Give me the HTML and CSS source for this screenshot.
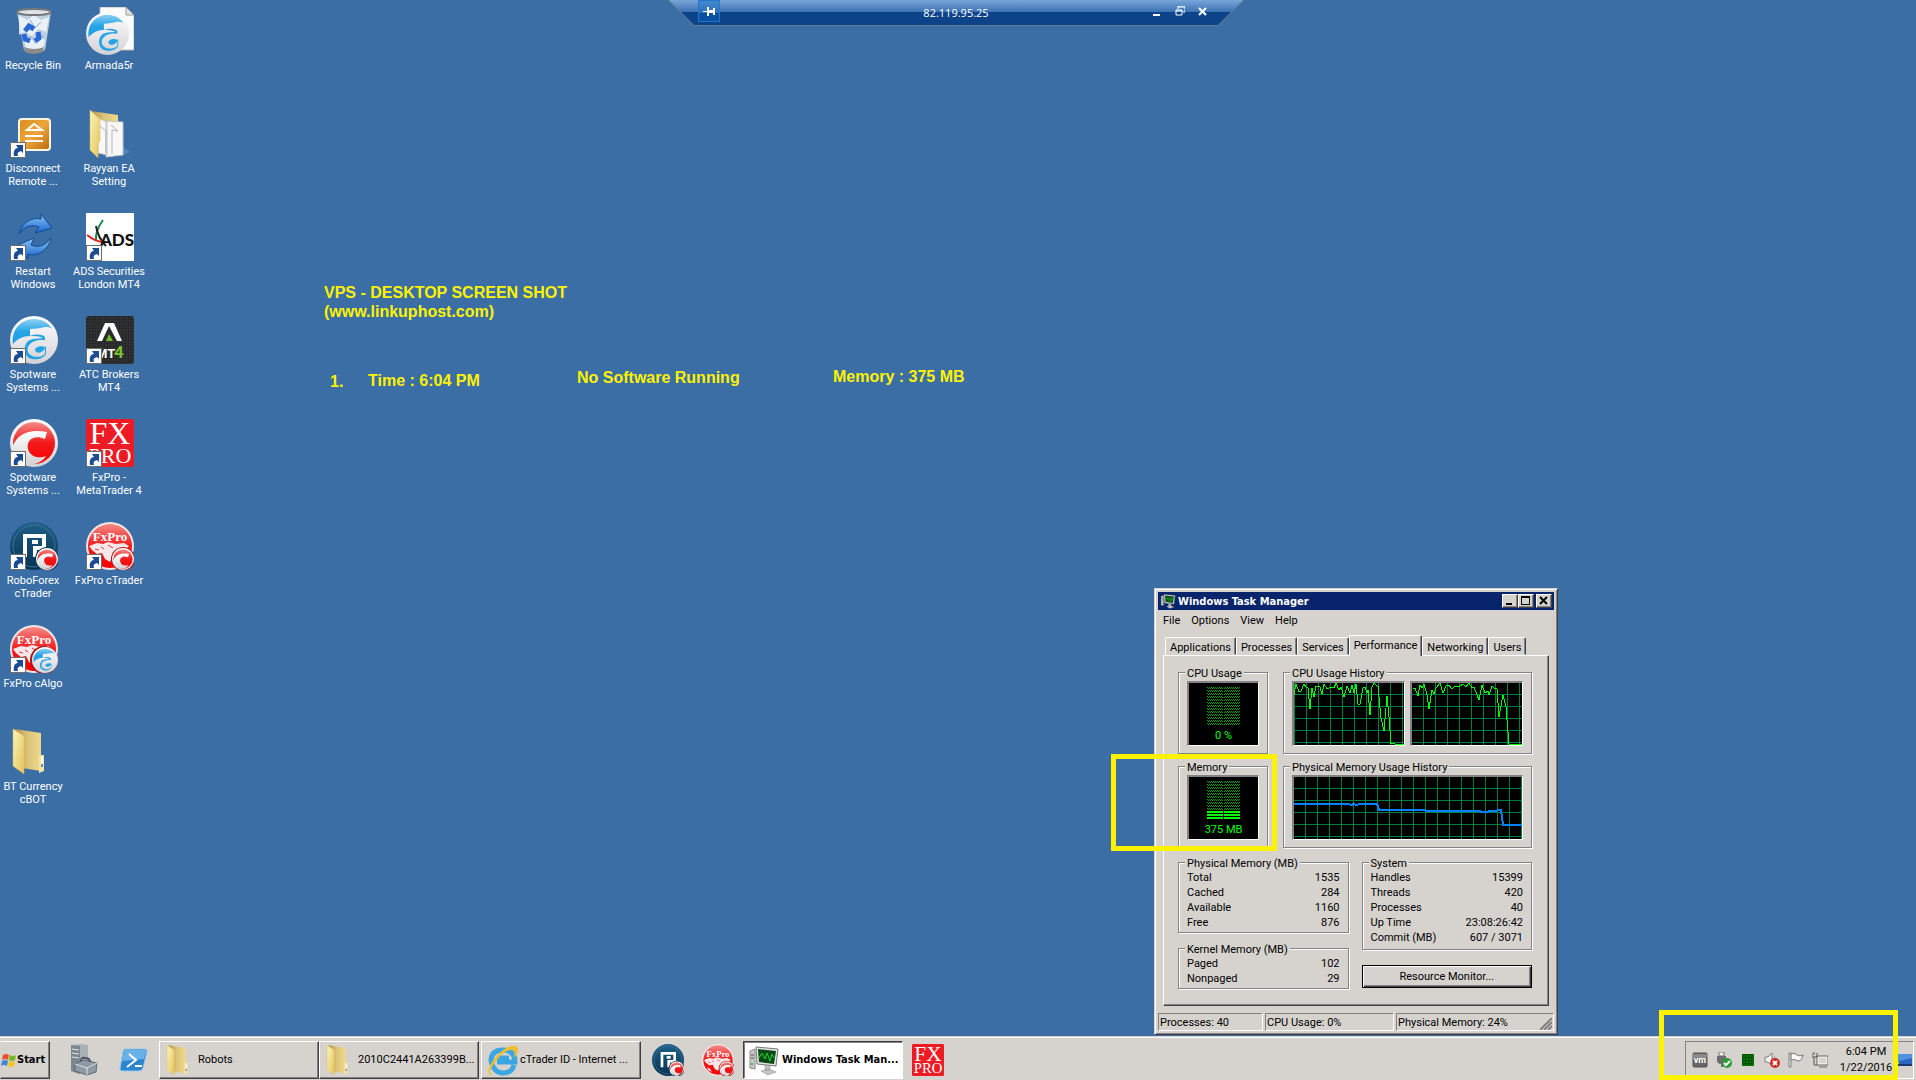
FILE: index.html
```
<!DOCTYPE html>
<html lang="en">

<head>
    <meta charset="UTF-8">
    <meta name="viewport" content="width=device-width, initial-scale=1.0">
    <title>Remote Desktop</title>
    <link rel="stylesheet" href="styles.css">
</head>

<body>
    <!-- Shared icon symbols -->
    <svg class="sprite" aria-hidden="true">
        <defs>
            <linearGradient id="silver" x1="0" y1="0" x2="0" y2="1">
                <stop offset="0" stop-color="#ffffff" />
                <stop offset="1" stop-color="#d2d2d6" />
            </linearGradient>
            <linearGradient id="sky" x1="0" y1="0" x2="0" y2="1">
                <stop offset="0" stop-color="#8fd0f2" />
                <stop offset=".5" stop-color="#25a5e6" />
                <stop offset="1" stop-color="#1f9fe2" />
            </linearGradient>
            <linearGradient id="red" x1="0" y1="0" x2="0" y2="1">
                <stop offset="0" stop-color="#f58a85" />
                <stop offset=".5" stop-color="#f21a1c" />
                <stop offset="1" stop-color="#f80000" />
            </linearGradient>
            <linearGradient id="orange" x1="0" y1="0" x2="1" y2="1">
                <stop offset="0" stop-color="#d98a1c" />
                <stop offset=".5" stop-color="#eda63c" />
                <stop offset="1" stop-color="#b9690a" />
            </linearGradient>
            <linearGradient id="navy" x1="0" y1="0" x2="0" y2="1">
                <stop offset="0" stop-color="#20608a" />
                <stop offset="1" stop-color="#063250" />
            </linearGradient>
            <linearGradient id="arrowBlue" x1="0" y1="0" x2="0" y2="1">
                <stop offset="0" stop-color="#8cc6f5" />
                <stop offset="1" stop-color="#1260cf" />
            </linearGradient>
            <linearGradient id="folder" x1="0" y1="0" x2="1" y2="1">
                <stop offset="0" stop-color="#fdf5b8" />
                <stop offset="1" stop-color="#e2c25a" />
            </linearGradient>
            <linearGradient id="folderBack" x1="0" y1="0" x2="1" y2="0">
                <stop offset="0" stop-color="#b3924a" />
                <stop offset=".5" stop-color="#dcc478" />
                <stop offset="1" stop-color="#efd98a" />
            </linearGradient>
            <pattern id="dither" width="2" height="3" patternUnits="userSpaceOnUse">
                <path d="M0 0h1v1H0zM1 1h1v1H1z" fill="#00a000" />
            </pattern>
            <pattern id="grid" x="11" y="11" width="12" height="12" patternUnits="userSpaceOnUse">
                <path d="M0 0h12v1H1v11H0z" fill="#008040" />
            </pattern>
            <pattern id="gridShift" x="12" y="11" width="12" height="12" patternUnits="userSpaceOnUse">
                <path d="M0 0h12v1H1v11H0z" fill="#008040" />
            </pattern>
            <pattern id="mesh" width="3" height="3" patternUnits="userSpaceOnUse">
                <path d="M0 0h3v3H0z" fill="#2d2f31" />
                <path d="M0 0h1v1H0z" fill="#17191a" />
            </pattern>
        </defs>

        <symbol id="i-shortcut" viewBox="0 0 16 16">
            <path d="M0 0h16v16H0z" fill="#6d6d6d" />
            <path d="M1 1h14v14H1z" fill="#fff" />
            <path d="M4 14C3 9 5 6 8 6L6 3h7v8l-2-2c-3 1-4 2-3 5z" fill="#1b4b93" />
        </symbol>

        <symbol id="i-algo" viewBox="0 0 48 48">
            <circle cx="24" cy="24" r="24" fill="url(#silver)" />
            <path d="M3 28C1 14 11 3 24 3C32 3 39 7 42 13C40 11 38 11 35 11C30 12 25 13 20 13V20C13 20 7 23 3 28z" fill="url(#sky)" />
            <path d="M20 20C26 18 31 18 35 21V24C29 24 21 24 18 31C15 40 28 44 35 38L35 31C31 29 25 31 25 34C26 38 31 37 34 34L36 30V38C34 42 28 44 22 43C12 41 13 27 20 24C24 22 29 23 33 22C29 20 24 20 20 20z" fill="#25a4e5" />
        </symbol>

        <symbol id="i-trader" viewBox="0 0 48 48">
            <circle cx="24" cy="24" r="24" fill="url(#silver)" />
            <circle cx="24" cy="24" r="21" fill="url(#red)" />
            <path d="M2 29C7 14 20 10 37 13L35 20C23 15 16 22 18 30C20 38 29 40 36 37C31 46 17 48 10 42C4 38 2 34 2 29z" fill="url(#silver)" />
        </symbol>

        <symbol id="i-robo" viewBox="0 0 48 48">
            <circle cx="24" cy="24" r="24" fill="url(#navy)" />
            <circle cx="24" cy="24" r="21" fill="none" stroke="#3f7496" />
            <path d="M15 35V14H34V26H25V35M22 20H28" fill="none" stroke="#fff" stroke-width="4" />
            <circle cx="37" cy="37" r="12" fill="#083653" />
            <use href="#i-trader" x="26" y="26" width="22" height="22" />
        </symbol>

        <symbol id="i-fxball" viewBox="0 0 48 48">
            <circle cx="24" cy="24" r="24" fill="#f3e4e4" />
            <circle cx="24" cy="24" r="22" fill="url(#red)" />
            <path d="M3 24l8-3 6 1 5-2 8 2 8-1 5 3-4 4-7-1-4 4-4 9-5-3-3-6-5 1-5-4zM8 35l4 2 3 5-6-3z" fill="#f7e9e9" />
            <path d="M15 25l3 2M22 23l5 3M9 27l4 1" stroke="#ee3333" />
            <text x="24" y="19" class="serif-mark" font-size="13" font-weight="bold" text-anchor="middle">FxPro</text>
        </symbol>

        <symbol id="i-fxtrader" viewBox="0 0 48 48">
            <use href="#i-fxball" width="48" height="48" />
            <circle cx="37" cy="37" r="12" fill="#b01818" />
            <use href="#i-trader" x="26" y="26" width="22" height="22" />
        </symbol>

        <symbol id="i-fxpro" viewBox="0 0 48 48">
            <rect width="48" height="48" rx="2" fill="#ed1c24" />
            <text x="24" y="25" class="serif-mark" font-size="32" text-anchor="middle">FX</text>
            <text x="24" y="44" class="serif-mark" font-size="22" text-anchor="middle">PRO</text>
        </symbol>

        <symbol id="i-folder" viewBox="0 0 48 48">
            <path d="M11 2l26 4v38l-19-3z" fill="url(#folderBack)" />
            <path d="M35 28h5v16l-5 2z" fill="#f5e3a0" />
            <path d="M37 30h2v9h-2z" fill="#fff" />
            <path d="M37 37h2v3h-2z" fill="#4a90e0" />
            <path d="M9 2l11 7v38L9 39z" fill="url(#folder)" stroke="#d9b95a" stroke-width=".5" />
        </symbol>

        <symbol id="i-monitor" viewBox="0 0 32 32">
            <path d="M1 7l5-2v20l-5-1z" fill="#c9c9c9" stroke="#8a8a8a" />
            <path d="M2 11h3M2 14h3" stroke="#555" />
            <path d="M2 19h2v2H2z" fill="#1ed81e" />
            <path d="M7 3l22 2-2 17-19-2z" fill="#e4e4e4" stroke="#777" />
            <path d="M9 5l18 2-2 13-15-2z" fill="#0a4a14" />
            <path d="M10 14l3-5 3 6 2-6 3 8 2-7 2 4" fill="none" stroke="#20d030" />
            <path d="M16 21l5 1v4h-5zM12 27l8-2 7 3-8 3z" fill="#c4c4c4" stroke="#888" stroke-width=".5" />
        </symbol>
    </svg>

    <main class="desktop">
        <nav class="shortcuts" aria-label="Desktop shortcuts">
            <div class="shortcut-column">
                <a href="#" class="shortcut">
                    <svg viewBox="0 0 48 48">
                        <path d="M7 5h34l-6 38q-10 5-21 0z" fill="#cfdae8" fill-opacity=".9" />
                        <path d="M9 9l9 4 6-5 7 5 8-3-3 15-8-3-6 8-7-6-6 4zM14 30l7 3 6-4 8 4-2 9H16z" fill="#f4f8fc" fill-opacity=".8" />
                        <path d="M20 13l5 8 6-6M15 34l6-5 5 8M28 26l6 4" fill="none" stroke="#8fa9c8" />
                        <ellipse cx="24" cy="5" rx="17" ry="3" fill="#dfe3e6" stroke="#73787c" stroke-width="2" />
                        <path d="M14 40q10 4 20 0l-1 5q-9 4-18 0z" fill="#8b8b88" />
                        <g fill="none" stroke="#2a66d6" stroke-width="5">
                            <path d="M15 24l4-5 5 3M28 25l1 6-4 3M20 34l-5-2-1-5" />
                        </g>
                    </svg>
                    <span>Recycle Bin</span>
                </a>
                <a href="#" class="shortcut">
                    <svg viewBox="0 0 48 48">
                        <rect x="9" y="9" width="31" height="31" rx="3" fill="url(#orange)" stroke="#fff4dc" stroke-width="2" />
                        <path d="M17 20l7-6 8 6zM15 26h18M15 31h18" fill="none" stroke="#fff" stroke-width="2" />
                        <use href="#i-shortcut" y="32" width="16" height="16" />
                    </svg>
                    <span>Disconnect<br>Remote ...</span>
                </a>
                <a href="#" class="shortcut">
                    <svg viewBox="0 0 48 48">
                        <path d="M9 21C12 9 22 4 31 6V1l11 14-17 5 4-6C22 11 15 13 9 21z" fill="url(#arrowBlue)" stroke="#12498f" />
                        <path d="M41 25C38 38 27 44 18 41v5L8 32l16-7-3 7c7 3 14 1 20-7z" fill="url(#arrowBlue)" stroke="#12498f" />
                        <use href="#i-shortcut" y="32" width="16" height="16" />
                    </svg>
                    <span>Restart<br>Windows</span>
                </a>
                <a href="#" class="shortcut">
                    <svg viewBox="0 0 48 48">
                        <use href="#i-algo" width="48" height="48" />
                        <use href="#i-shortcut" y="32" width="16" height="16" />
                    </svg>
                    <span>Spotware<br>Systems ...</span>
                </a>
                <a href="#" class="shortcut">
                    <svg viewBox="0 0 48 48">
                        <use href="#i-trader" width="48" height="48" />
                        <use href="#i-shortcut" y="32" width="16" height="16" />
                    </svg>
                    <span>Spotware<br>Systems ...</span>
                </a>
                <a href="#" class="shortcut">
                    <svg viewBox="0 0 48 48">
                        <use href="#i-robo" width="48" height="48" />
                        <use href="#i-shortcut" y="32" width="16" height="16" />
                    </svg>
                    <span>RoboForex<br>cTrader</span>
                </a>
                <a href="#" class="shortcut">
                    <svg viewBox="0 0 48 48">
                        <use href="#i-fxball" width="48" height="48" />
                        <circle cx="34" cy="35" r="14" fill="#a81616" />
                        <use href="#i-algo" x="22" y="22" width="26" height="26" />
                        <use href="#i-shortcut" y="32" width="16" height="16" />
                    </svg>
                    <span>FxPro cAlgo</span>
                </a>
                <a href="#" class="shortcut">
                    <svg viewBox="6 1 48 48">
                        <use href="#i-folder" width="48" height="48" />
                    </svg>
                    <span>BT Currency<br>cBOT</span>
                </a>
            </div>
            <div class="shortcut-column">
                <a href="#" class="shortcut">
                    <svg viewBox="0 0 48 48">
                        <path d="M14 0h26l8 8v35H14z" fill="#fbfbfb" stroke="#b8b8b8" />
                        <path d="M40 0v8h8z" fill="#e2e2e2" stroke="#9c9c9c" />
                        <use href="#i-algo" y="5" width="43" height="43" />
                    </svg>
                    <span>Armada5r</span>
                </a>
                <a href="#" class="shortcut">
                    <svg viewBox="0 0 48 48">
                        <path d="M36 36l8 6-8 4z" fill="#4f86bf" />
                        <path d="M5 1l27 4v37l-18-2z" fill="url(#folderBack)" />
                        <path d="M12 8l9 4v33l-9-2zM20 11l17 1v33l-17 2z" fill="#f8f8f8" stroke="#c4c4c4" />
                        <path d="M14 16l6 5v22M25 15l7 6-6-1v24" fill="none" stroke="#b5b5b5" />
                        <path d="M4 0l10 9v22l-2 2v15L4 40z" fill="url(#folder)" stroke="#d9b95a" stroke-width=".5" />
                    </svg>
                    <span>Rayyan EA<br>Setting</span>
                </a>
                <a href="#" class="shortcut">
                    <svg viewBox="0 0 48 48">
                        <path d="M0 0h48v48H0z" fill="#fff" />
                        <path d="M17 7q-8 11-7 21" fill="none" stroke="#138a45" stroke-width="2" />
                        <path d="M10 13q2 12 10 20" fill="none" stroke="#222" stroke-width="2" />
                        <path d="M1 22q10 8 19 7" fill="none" stroke="#e32020" stroke-width="2" />
                        <text x="31" y="33" class="ads-mark" font-size="17" text-anchor="middle">ADS</text>
                        <use href="#i-shortcut" y="32" width="16" height="16" />
                    </svg>
                    <span>ADS Securities<br>London MT4</span>
                </a>
                <a href="#" class="shortcut">
                    <svg viewBox="0 0 48 48">
                        <rect width="48" height="48" rx="3" fill="url(#mesh)" />
                        <path d="M11 25L19 7h9l8 18h-5L23 10l-7 15z" fill="#fff" />
                        <path d="M20 25l3-7 4 7z" fill="#6fbf2b" />
                        <text x="10" y="42" class="mt-mark" font-size="13">MT</text>
                        <text x="28" y="42" class="mt-mark mt-four" font-size="17">4</text>
                        <use href="#i-shortcut" y="32" width="16" height="16" />
                    </svg>
                    <span>ATC Brokers<br>MT4</span>
                </a>
                <a href="#" class="shortcut">
                    <svg viewBox="0 0 48 48">
                        <use href="#i-fxpro" width="48" height="48" />
                        <use href="#i-shortcut" y="32" width="16" height="16" />
                    </svg>
                    <span>FxPro -<br>MetaTrader 4</span>
                </a>
                <a href="#" class="shortcut">
                    <svg viewBox="0 0 48 48">
                        <use href="#i-fxtrader" width="48" height="48" />
                        <use href="#i-shortcut" y="32" width="16" height="16" />
                    </svg>
                    <span>FxPro cTrader</span>
                </a>
            </div>
        </nav>

        <!-- Remote connection bar -->
        <header class="remote-bar">
            <div class="remote-inner">
                <button class="remote-pin" aria-label="Pin">
                    <svg width="12" height="9" viewBox="0 0 12 9"><path d="M0 4h4v1H0zM4 0h2v9H4zM6 3h4v3H6zM10 1h2v7h-2z" fill="#fff" /></svg>
                </button>
                <span class="remote-address">82.119.95.25</span>
                <div class="remote-controls">
                    <button aria-label="Minimize"><svg width="10" height="10"><path d="M1 8h7v2H1z" fill="#fff" /></svg></button>
                    <button aria-label="Restore"><svg width="10" height="10"><path d="M3 0h7v6H8M3 0v3M3 1h7M1 4h6v5H1zM1 5h6" fill="none" stroke="#fff" /></svg></button>
                    <button aria-label="Close"><svg width="10" height="10"><path d="M1 2l7 7M8 2L1 9" stroke="#fff" stroke-width="2" /></svg></button>
                </div>
            </div>
        </header>

        <p class="note note-title">VPS - DESKTOP SCREEN SHOT<br>(www.linkuphost.com)</p>
        <p class="note note-number">1.</p>
        <p class="note note-time">Time : 6:04 PM</p>
        <p class="note note-software">No Software Running</p>
        <p class="note note-memory">Memory : 375 MB</p>

        <!-- Task Manager -->
        <section class="window">
            <div class="title-bar">
                <svg class="title-icon" width="17" height="16" viewBox="0 0 32 32"><use href="#i-monitor" width="32" height="32" /></svg>
                <h1>Windows Task Manager</h1>
                <button aria-label="Minimize"><svg width="12" height="10"><path d="M2 7h6v2H2z" /></svg></button>
                <button aria-label="Maximize"><svg width="12" height="10"><path d="M1 0h9v9H1zM2 2v6h7V2z" fill-rule="evenodd" /></svg></button>
                <button class="close" aria-label="Close"><svg width="12" height="10"><path d="M2 1l7 7M9 1L2 8" stroke="#000" stroke-width="2" /></svg></button>
            </div>
            <nav class="menu">
                <a href="#">File</a>
                <a href="#">Options</a>
                <a href="#">View</a>
                <a href="#">Help</a>
            </nav>
            <div class="tabs" role="tablist">
                <button role="tab">Applications</button>
                <button role="tab">Processes</button>
                <button role="tab">Services</button>
                <button role="tab" class="selected" aria-selected="true">Performance</button>
                <button role="tab">Networking</button>
                <button role="tab">Users</button>
            </div>
            <div class="panel">
                <div class="panel-row">
                    <fieldset class="gauge-group">
                        <legend>CPU Usage</legend>
                        <div class="screen gauge">
                            <svg width="33" height="38"><path d="M0 0h16v38H0zM17 0h16v38H17z" fill="url(#dither)" /></svg>
                            <span>0 %</span>
                        </div>
                    </fieldset>
                    <fieldset class="history-group">
                        <legend>CPU Usage History</legend>
                        <div class="screens">
                            <div class="screen">
                                <svg viewBox="0 0 110 62" preserveAspectRatio="none">
                                    <path d="M0 0h110v62H0z" fill="url(#gridShift)" />
                                    <polyline class="cpu-line" points="0,12 2,1 5,9 7,8 10,1 12,4 14,5 16,26 18,5 20,14 22,3 24,3 26,4 28,11 30,1 33,6 37,4 40,5 42,0 45,7 47,4 50,14 53,3 56,10 58,2 60,10 62,1 64,21 66,21 69,5 71,4 73,10 74,7 76,32 78,4 80,0 83,3 84,3 87,35 90,48 93,13 95,34 97,61 99,60 101,61 110,61" />
                                </svg>
                            </div>
                            <div class="screen">
                                <svg viewBox="0 0 110 62" preserveAspectRatio="none">
                                    <path d="M0 0h110v62H0z" fill="url(#grid)" />
                                    <polyline class="cpu-line" points="1,5 3,5 6,13 8,2 10,5 12,1 15,12 17,26 20,7 22,11 24,5 28,0 31,10 34,3 37,2 40,6 43,3 47,4 51,1 54,4 57,0 60,5 62,4 67,17 70,2 73,10 76,8 77,12 80,3 82,5 85,6 87,34 91,12 94,24 95,37 97,61 110,61" />
                                </svg>
                            </div>
                        </div>
                    </fieldset>
                </div>
                <div class="panel-row">
                    <fieldset class="gauge-group">
                        <legend>Memory</legend>
                        <div class="screen gauge">
                            <svg width="33" height="38">
                                <path d="M0 0h16v29H0zM17 0h16v29H17z" fill="url(#dither)" />
                                <path d="M0 30h16v2H0zM17 30h16v2H17zM0 33h16v2H0zM17 33h16v2H17zM0 36h16v2H0zM17 36h16v2H17z" fill="#00ff00" />
                            </svg>
                            <span>375 MB</span>
                        </div>
                    </fieldset>
                    <fieldset class="history-group">
                        <legend>Physical Memory Usage History</legend>
                        <div class="screens">
                            <div class="screen">
                                <svg viewBox="0 0 228 62" preserveAspectRatio="none">
                                    <path d="M0 0h228v62H0z" fill="url(#grid)" />
                                    <polyline class="memory-line" points="0,27 55,27 57,28 60,27 62,28 66,27 83,27 85,33 131,33 132,34 185,34 188,35 193,35 196,34 202,34 204,33 207,33 209,48 228,48" />
                                </svg>
                            </div>
                        </div>
                    </fieldset>
                </div>
                <div class="details">
                    <div class="details-column">
                        <fieldset>
                            <legend>Physical Memory (MB)</legend>
                            <table>
                                <tr><th scope="row">Total</th><td>1535</td></tr>
                                <tr><th scope="row">Cached</th><td>284</td></tr>
                                <tr><th scope="row">Available</th><td>1160</td></tr>
                                <tr><th scope="row">Free</th><td>876</td></tr>
                            </table>
                        </fieldset>
                        <fieldset>
                            <legend>Kernel Memory (MB)</legend>
                            <table>
                                <tr><th scope="row">Paged</th><td>102</td></tr>
                                <tr><th scope="row">Nonpaged</th><td>29</td></tr>
                            </table>
                        </fieldset>
                    </div>
                    <div class="details-column">
                        <fieldset class="system-group">
                            <legend>System</legend>
                            <table>
                                <tr><th scope="row">Handles</th><td>15399</td></tr>
                                <tr><th scope="row">Threads</th><td>420</td></tr>
                                <tr><th scope="row">Processes</th><td>40</td></tr>
                                <tr><th scope="row">Up Time</th><td>23:08:26:42</td></tr>
                                <tr><th scope="row">Commit (MB)</th><td>607 / 3071</td></tr>
                            </table>
                        </fieldset>
                        <button class="resource-button">Resource Monitor...</button>
                    </div>
                </div>
            </div>
            <footer class="status-bar">
                <span class="status-processes">Processes: 40</span>
                <span class="status-cpu">CPU Usage: 0%</span>
                <span class="status-memory">Physical Memory: 24%
                    <svg width="12" height="12"><path d="M0 12L12 0M4 12l8-8M8 12l4-4" stroke="#808080" stroke-width="2" /></svg>
                </span>
            </footer>
        </section>

        <div class="marker marker-memory"></div>
    </main>

    <div class="taskbar">
        <button class="start">
            <svg width="16" height="16" viewBox="0 0 16 16">
                <path d="M2 3q3-2 6 0L7 8q-3-2-6 0z" fill="#e8502a" />
                <path d="M9 3q3 2 6 0l-1 5q-3 2-6 0z" fill="#76b82a" />
                <path d="M1 9q3-2 6 0l-1 5q-3-2-6 0z" fill="#3b87d8" />
                <path d="M8 9q3 2 6 0l-1 5q-3 2-6 0z" fill="#f6c31c" />
            </svg>
            Start
        </button>
        <button class="launch" aria-label="Server Manager">
            <svg viewBox="0 0 32 32">
                <path d="M3 1l9-1 8 1v26l-9 3-8-3z" fill="#a9b1b6" />
                <path d="M3 1l9 1v28l-9-3z" fill="#7c868d" />
                <path d="M4 5l7 1M4 9l7 1M4 13l7 1" stroke="#dfe6ea" />
                <path d="M7 20l9-4 13 3-1 9-9 3-12-4z" fill="#8e9ba5" stroke="#5f6b74" />
                <path d="M7 20l12 4 10-5M19 24v7" fill="none" stroke="#d8e0e5" />
                <path d="M13 17q0-4 4-3 5 0 5 4" fill="none" stroke="#4b545b" stroke-width="2" />
            </svg>
        </button>
        <button class="launch" aria-label="PowerShell">
            <svg viewBox="0 0 32 32">
                <path d="M7 5h20q3 0 2 3l-4 16q-1 3-4 3H4q-3 0-2-3L5 8q0-3 2-3z" fill="#2b86cf" stroke="#9ccbee" />
                <path d="M7 6h20q2 0 1 2l-2 7L4 17 6 8q0-2 1-2z" fill="#69b1e6" />
                <path d="M11 10l7 6-9 7M17 22h7" fill="none" stroke="#fff" stroke-width="2" />
            </svg>
        </button>
        <button class="task">
            <svg viewBox="6 0 48 48"><use href="#i-folder" width="48" height="48" /></svg>
            <span>Robots</span>
        </button>
        <button class="task">
            <svg viewBox="6 0 48 48"><use href="#i-folder" width="48" height="48" /></svg>
            <span>2010C2441A263399B...</span>
        </button>
        <button class="task task-browser">
            <svg viewBox="0 0 32 32">
                <path d="M27 21q-2 8-11 8T4 17Q4 6 16 6t12 12H10M10 14h12" fill="none" stroke="#3aa6e2" stroke-width="5" />
                <path d="M3 31Q-2 26 9 13T29 2q5 4-2 12 2-8-2-8Q18 5 9 17T5 30z" fill="#f2bd2c" />
            </svg>
            <span>cTrader ID - Internet ...</span>
        </button>
        <button class="launch" aria-label="RoboForex cTrader"><svg viewBox="0 0 48 48"><use href="#i-robo" width="48" height="48" /></svg></button>
        <button class="launch" aria-label="FxPro cTrader"><svg viewBox="0 0 48 48"><use href="#i-fxtrader" width="48" height="48" /></svg></button>
        <button class="task active">
            <svg viewBox="0 0 32 32"><use href="#i-monitor" width="32" height="32" /></svg>
            <span>Windows Task Man...</span>
        </button>
        <button class="launch" aria-label="FxPro MetaTrader 4"><svg viewBox="0 0 48 48"><use href="#i-fxpro" width="48" height="48" /></svg></button>

        <div class="tray">
            <svg viewBox="0 0 16 16">
                <rect x="1" y="1" width="14" height="14" rx="1" fill="#666" stroke="#555" />
                <path d="M1 2h14v4H1z" fill="#8a8a8a" />
                <text x="8" y="11" class="vm-mark" font-size="9" text-anchor="middle">vm</text>
            </svg>
            <svg viewBox="0 0 16 16">
                <path d="M3 0h5v4H3z" fill="#eee" stroke="#777" />
                <path d="M1 4h9v5q0 3-3 3v3H5v-3q-4 0-4-4z" fill="#6d6d6d" />
                <circle cx="11" cy="11" r="5" fill="#2c9b36" />
                <path d="M8 11l2 2 4-4" fill="none" stroke="#fff" stroke-width="2" />
            </svg>
            <svg viewBox="0 0 16 16">
                <path d="M2 2h12v12H2z" fill="#003c00" />
                <path d="M4 2v12M7 2v12M10 2v12M13 2v12M2 4h12M2 7h12M2 10h12M2 13h12" stroke="#008000" />
            </svg>
            <svg viewBox="0 0 16 16">
                <path d="M1 5h3l4-4v13l-4-4H1z" fill="#f5f5f5" stroke="#7a7a7a" />
                <path d="M10 4q2 2 1 5" fill="none" stroke="#999" />
                <circle cx="11" cy="11" r="5" fill="#d8281e" />
                <path d="M9 9l4 4M13 9l-4 4" stroke="#fff" stroke-width="2" />
            </svg>
            <svg viewBox="0 0 16 16">
                <path d="M1 1h2v14H1z" fill="#fff" stroke="#777" />
                <path d="M3 2q3-2 6 1 3 2 6 0-1 6-4 6-2 0-3-1-2-1-5 0z" fill="#fafafa" stroke="#777" />
            </svg>
            <svg viewBox="0 0 16 16">
                <path d="M5 4h11v9H5z" fill="#eee" stroke="#666" />
                <path d="M7 6h7v5H7z" fill="#d6d3ce" />
                <path d="M7 15h8" stroke="#666" />
                <path d="M0 1v4h5V1M2 0v3M2 5v8h3" fill="none" stroke="#555" />
            </svg>
            <time class="clock">6:04 PM<br>1/22/2016</time>
            <svg class="show-desktop" viewBox="0 0 16 16">
                <path d="M0 2h16v11H0z" fill="#2868c0" />
                <path d="M0 2h16v4L0 10z" fill="#4f92e0" />
                <path d="M0 12h16v2H0z" fill="#173b70" />
                <path d="M1 10h2v2H1z" fill="#f6c31c" />
            </svg>
        </div>
        <div class="marker marker-clock"></div>
    </div>
</body>

</html>
```
FILE: styles.css
```
* {
    box-sizing: border-box;
}

body {
    display: flex;
    flex-direction: column;
    min-height: 100vh;
    margin: 0;
    overflow: hidden;
    background: #3a6ea5;
    color: #000;
    font: 11px/14px Roboto, "Liberation Sans", sans-serif;
}

button {
    padding: 0;
    border: 0;
    background: none;
    color: inherit;
    font: inherit;
}

a {
    color: inherit;
    text-decoration: none;
}

svg {
    display: block;
    flex: none;
}

.sprite {
    position: absolute;
    visibility: hidden;
    width: 0;
    height: 0;
}

/* Patterns take their visibility from the sprite, not from the shape they fill */
.sprite pattern {
    visibility: visible;
}

/* Lettering inside logos */
.serif-mark {
    fill: #fff;
    font-family: "Liberation Serif", serif;
}

.ads-mark {
    fill: #111;
    font-family: Lato, sans-serif;
    font-weight: 900;
}

.mt-mark {
    fill: #fff;
    font-family: Roboto, sans-serif;
    font-weight: bold;
}

.mt-four {
    fill: #7ac52f;
}

.vm-mark {
    fill: #fff;
    font-family: Roboto, sans-serif;
    font-weight: bold;
}

/* Desktop */
.desktop {
    position: relative;
    flex: 1;
}

.shortcuts {
    display: flex;
    margin-left: -4px;
    padding-top: 7px;
}

.shortcut-column {
    display: flex;
    flex-direction: column;
    width: 76px;
}

.shortcut {
    display: flex;
    flex-direction: column;
    align-items: center;
    height: 103px;
    color: #fff;
    line-height: 13px;
    text-align: center;
}

.shortcut svg {
    width: 48px;
    height: 48px;
    margin-bottom: 4px;
}

.shortcut span {
    margin-right: 2px;
    white-space: nowrap;
}

/* Remote connection bar */
.remote-bar {
    position: absolute;
    top: 0;
    left: calc(50% - 290px);
    width: 576px;
    height: 26px;
    padding: 0 1px 1px;
    background: #6c7c90;
    clip-path: polygon(0 0, 100% 0, 550px 100%, 26px 100%);
}

.remote-inner {
    display: flex;
    align-items: flex-start;
    height: 25px;
    padding: 0 29px;
    background: linear-gradient(#79a5d8, #3b72b3 12px, #0c4389 12px);
    clip-path: polygon(0 0, 100% 0, 549px 100%, 25px 100%);
    color: #fff;
}

.remote-pin {
    display: flex;
    align-items: center;
    justify-content: center;
    width: 22px;
    height: 22px;
    border: 1px solid #1f78cf;
    background: linear-gradient(#4688cc, #2a70b8 12px, #0a50a0 12px);
}

.remote-address {
    flex: 1;
    padding-left: 40px;
    font-family: "Open Sans", sans-serif;
    line-height: 25px;
    text-align: center;
}

.remote-controls {
    display: flex;
    gap: 13px;
    padding: 6px 6px 0 0;
}

/* Yellow notes on the desktop */
.note {
    position: absolute;
    margin: 0;
    color: #fff200;
    font: bold 16px/19px "Liberation Sans", Arial, sans-serif;
    white-space: nowrap;
}

.note-title {
    top: 283px;
    left: 324px;
}

.note-number {
    top: 372px;
    left: 330px;
}

.note-time {
    top: 371px;
    left: 368px;
}

.note-software {
    top: 368px;
    left: 577px;
}

.note-memory {
    top: 367px;
    left: 833px;
}

.marker {
    position: absolute;
    border: 5px solid #fff200;
    pointer-events: none;
}

.marker-memory {
    right: 639px;
    bottom: 185px;
    width: 166px;
    height: 97px;
}

.marker-clock {
    right: 18px;
    bottom: 0;
    width: 239px;
    height: 70px;
}

/* Task Manager window */
.window {
    position: absolute;
    right: 358px;
    bottom: 1px;
    width: 404px;
    padding: 3px;
    border: 1px solid;
    border-color: #d6d3ce #404040 #404040 #d6d3ce;
    box-shadow: inset 1px 1px #fff, inset -1px -1px #848284;
    background: #d6d3ce;
}

.title-bar {
    display: flex;
    align-items: center;
    height: 18px;
    padding: 0 2px;
    background: #08246b;
    color: #fff;
}

.title-bar h1 {
    flex: 1;
    margin: 1px 0 0 1px;
    font: bold 11px/18px "DejaVu Sans Condensed", "DejaVu Sans", sans-serif;
}

.title-bar button {
    width: 16px;
    height: 14px;
    padding: 1px;
    border: 1px solid;
    border-color: #fff #404040 #404040 #fff;
    box-shadow: inset -1px -1px #848284;
    background: #d6d3ce;
}

.title-bar .close {
    margin-left: 2px;
}

.menu {
    display: flex;
    gap: 11px;
    height: 25px;
    padding: 4px 5px;
}

.tabs {
    display: flex;
    align-items: flex-end;
    height: 20px;
    margin-left: 7px;
}

.tabs button {
    height: 18px;
    padding: 3px 4px 0;
    border: 1px solid;
    border-color: #fff #404040 transparent #fff;
    border-radius: 2px 2px 0 0;
    box-shadow: inset -1px 0 #848284;
    line-height: 14px;
}

.tabs .selected {
    position: relative;
    height: 21px;
    margin-bottom: -1px;
    padding: 1px 4px 2px;
    border-bottom: 0;
    background: #d6d3ce;
}

.panel {
    height: 351px;
    margin: 0 5px;
    padding: 8px 16px 0 14px;
    border: 1px solid;
    border-color: #fff #404040 #404040 #fff;
    box-shadow: inset -1px -1px #848284;
}

.panel-row {
    display: flex;
    gap: 15px;
    margin-bottom: 4px;
}

fieldset {
    min-width: 0;
    margin: 0;
    padding: 0 8px;
    border: 1px solid #848284;
    box-shadow: 1px 1px #fff, inset 1px 1px #fff;
}

legend {
    margin-left: -2px;
    padding: 3px 2px 0;
    background: #d6d3ce;
    line-height: 13px;
}

.gauge-group {
    width: 90px;
    height: 90px;
}

.history-group {
    flex: 1;
    height: 90px;
}

.screens {
    display: flex;
    gap: 5px;
}

.screen {
    flex: 1;
    height: 65px;
    margin-top: 1px;
    border: solid;
    border-width: 2px 1px 1px 2px;
    border-color: #848284 #fff #fff #848284;
    background: #000;
}

.screen svg {
    width: 100%;
    height: 62px;
}

.gauge {
    display: flex;
    flex-direction: column;
    align-items: center;
    padding-top: 4px;
    color: #00ff00;
}

.gauge svg {
    width: 33px;
    height: 38px;
    margin-bottom: 4px;
}

.cpu-line {
    fill: none;
    stroke: #00ff00;
    stroke-width: 1;
    shape-rendering: crispEdges;
}

.memory-line {
    fill: none;
    stroke: #0082ff;
    stroke-width: 2;
    shape-rendering: crispEdges;
}

.details {
    display: flex;
    gap: 13px;
    margin-top: 6px;
}

.details-column {
    display: flex;
    flex: 1;
    flex-direction: column;
    gap: 7px;
}

.details fieldset {
    padding-bottom: 2px;
}

.details .system-group {
    margin-bottom: 8px;
    padding-bottom: 4px;
}

table {
    width: 100%;
    border-collapse: collapse;
}

th,
td {
    height: 15px;
    padding: 0;
    font-weight: normal;
    text-align: left;
}

td {
    text-align: right;
}

.resource-button {
    height: 23px;
    border: 1px solid #000;
    box-shadow: inset 1px 1px #fff, inset -1px -1px #404040, inset -2px -2px #848284;
}

.status-bar {
    display: flex;
    gap: 2px;
    margin-top: 7px;
}

.status-bar span {
    height: 18px;
    padding: 2px 1px 0;
    border: 1px solid;
    border-color: #848284 #fff #fff #848284;
}

.status-processes {
    width: 105px;
}

.status-cpu {
    width: 129px;
}

.status-memory {
    display: flex;
    flex: 1;
    align-items: flex-end;
    justify-content: space-between;
}

/* Taskbar */
.taskbar {
    position: relative;
    display: flex;
    align-items: center;
    height: 44px;
    padding-top: 2px;
    border-top: 1px solid #d6d3ce;
    box-shadow: inset 0 1px #fff;
    background: #d6d3ce;
}

.start {
    display: flex;
    align-items: center;
    width: 50px;
    height: 38px;
    margin-right: 9px;
    border: 1px solid;
    border-color: #fff #404040 #404040 transparent;
    box-shadow: inset -1px -1px #848284;
    font: bold 11px/14px "DejaVu Sans Condensed", "DejaVu Sans", sans-serif;
}

.launch {
    display: flex;
    justify-content: center;
    width: 50px;
}

.launch svg {
    width: 32px;
    height: 32px;
}

.task {
    display: flex;
    align-items: center;
    width: 160px;
    height: 38px;
    padding-left: 5px;
    border: 1px solid;
    border-color: #fff #404040 #404040 #fff;
    box-shadow: inset -1px -1px #848284;
    white-space: nowrap;
}

.task svg {
    width: 32px;
    height: 32px;
    margin-right: 1px;
}

.task-browser {
    margin: 0 2px;
}

.active {
    border-color: #404040 #fff #fff #404040;
    box-shadow: inset 1px 1px #848284;
    background: #fff;
    font: bold 11px/14px "DejaVu Sans Condensed", "DejaVu Sans", sans-serif;
}

.tray {
    display: flex;
    align-items: center;
    gap: 8px;
    height: 38px;
    margin: 0 2px 0 auto;
    padding: 0 1px 0 6px;
    border: 1px solid;
    border-color: #848284 #fff #fff #848284;
}

.tray svg {
    width: 16px;
    height: 16px;
}

.clock {
    width: 60px;
    line-height: 16px;
    text-align: center;
}

.tray .show-desktop {
    margin-left: -8px;
}
```
